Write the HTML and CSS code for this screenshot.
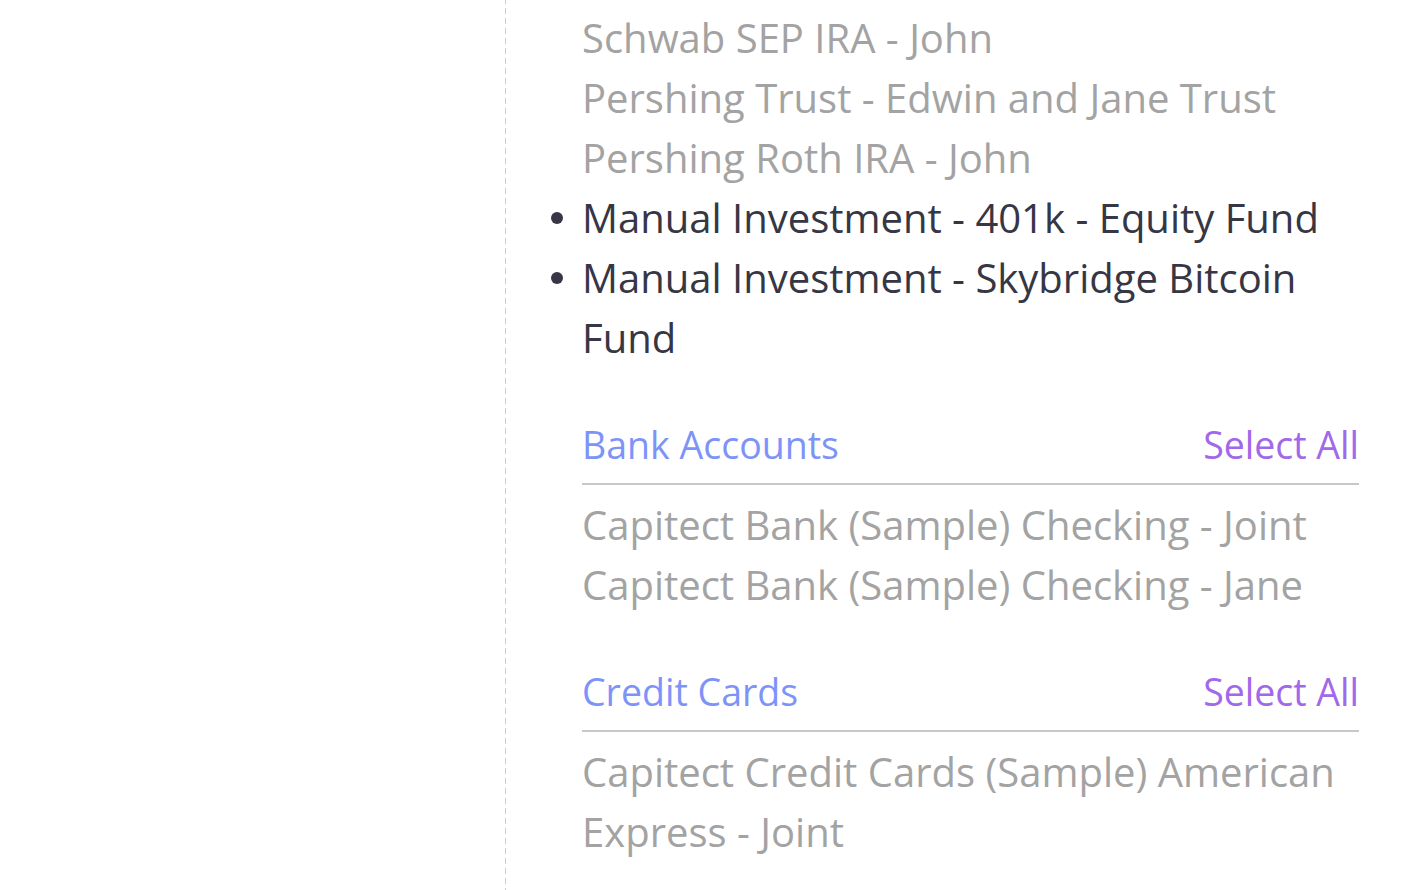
FILE: index.html
```html
<!DOCTYPE html>
<html>
<head>
<meta charset="utf-8">
<link rel="stylesheet" href="styles.css">
</head>
<body>
<div class="layout">
  <aside class="sidebar"></aside>
  <main class="panel">
    <ul class="accounts">
      <li class="off">Schwab SEP IRA - John</li>
      <li class="off">Pershing Trust - Edwin and Jane Trust</li>
      <li class="off">Pershing Roth IRA - John</li>
      <li class="on">Manual Investment - 401k - Equity Fund</li>
      <li class="on">Manual Investment - Skybridge Bitcoin Fund</li>
    </ul>
    <section class="group">
      <div class="group-head">
        <span class="group-title">Bank Accounts</span>
        <span class="select-all">Select All</span>
      </div>
      <ul class="accounts">
        <li class="off">Capitect Bank (Sample) Checking - Joint</li>
        <li class="off">Capitect Bank (Sample) Checking - Jane</li>
      </ul>
    </section>
    <section class="group">
      <div class="group-head">
        <span class="group-title">Credit Cards</span>
        <span class="select-all">Select All</span>
      </div>
      <ul class="accounts">
        <li class="off">Capitect Credit Cards (Sample) American Express - Joint</li>
      </ul>
    </section>
  </main>
</div>
</body>
</html>
```

FILE: styles.css
```css
html, body {
  margin: 0;
  padding: 0;
  background: #ffffff;
}
body {
  font-family: "Open Sans", "Noto Sans", sans-serif;
  font-size: 40px;
  line-height: 60px;
  color: #a3a3a3;
  overflow: hidden;
  height: 890px;
}
.layout {
  display: flex;
  height: 890px;
}
.sidebar {
  width: 506px;
  flex: none;
  background-image: linear-gradient(to bottom, #cccccc 0, #cccccc 6px, transparent 6px, transparent 10px);
  background-size: 1px 10px;
  background-repeat: repeat-y;
  background-position: right -2px;
}
.panel {
  width: 777px;
  padding-left: 76px;
  padding-top: 8px;
}
.accounts {
  list-style: none;
  margin: 0;
  padding: 0;
}
.accounts li {
  position: relative;
}
.accounts li.on {
  color: #363644;
}
.accounts li.on::before {
  content: "";
  position: absolute;
  left: -31px;
  top: 24px;
  width: 12px;
  height: 12px;
  border-radius: 50%;
  background: #363644;
}
.group {
  margin-top: 47px;
}
.group-head {
  display: flex;
  justify-content: space-between;
  align-items: baseline;
  font-size: 37.5px;
  padding-bottom: 8px;
  border-bottom: 2px solid #c8c8c8;
  margin-bottom: 10px;
}
.group-title {
  color: #7e93f8;
}
.select-all {
  color: #a268ea;
}
```
